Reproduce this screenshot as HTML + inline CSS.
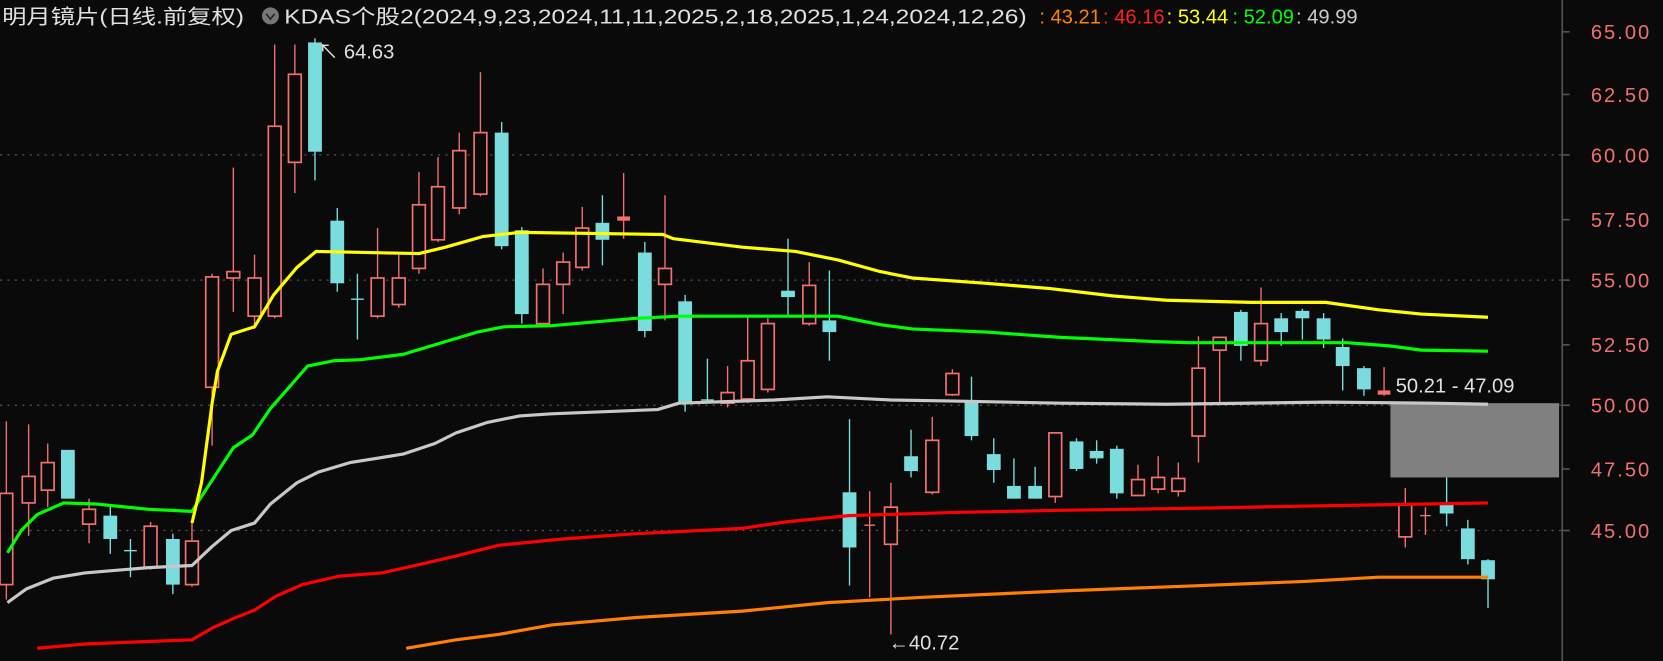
<!DOCTYPE html>
<html><head><meta charset="utf-8"><style>
html,body{margin:0;padding:0;background:#0a0a0a;overflow:hidden}
svg{display:block}
text{font-family:"Liberation Sans","Noto Sans CJK SC",sans-serif}
</style></head><body>
<svg width="1663" height="661" viewBox="0 0 1568 623" preserveAspectRatio="none" xmlns="http://www.w3.org/2000/svg">
<rect width="1568" height="623" fill="#0a0a0a"/>
<g stroke="#555" stroke-width="1.2" stroke-dasharray="2,5">
<line x1="0" y1="146" x2="1473" y2="146"/>
<line x1="0" y1="264" x2="1473" y2="264"/>
<line x1="0" y1="382" x2="1473" y2="382"/>
<line x1="0" y1="500" x2="1473" y2="500"/>
</g>
<line x1="1473" y1="0" x2="1473" y2="623" stroke="#555" stroke-width="1.5"/>
<g stroke="#555" stroke-width="1.5">
<line x1="1473" y1="30" x2="1480" y2="30"/><line x1="1473" y1="89" x2="1480" y2="89"/>
<line x1="1473" y1="146" x2="1480" y2="146"/><line x1="1473" y1="207" x2="1480" y2="207"/>
<line x1="1473" y1="264" x2="1480" y2="264"/><line x1="1473" y1="325" x2="1480" y2="325"/>
<line x1="1473" y1="382" x2="1480" y2="382"/><line x1="1473" y1="442" x2="1480" y2="442"/>
<line x1="1473" y1="500" x2="1480" y2="500"/>
</g>
<g fill="#f07070" font-size="19" lengthAdjust="spacingAndGlyphs">
<text x="1500" y="37" textLength="55">65.00</text><text x="1500" y="96" textLength="55">62.50</text>
<text x="1500" y="153" textLength="55">60.00</text><text x="1500" y="214" textLength="55">57.50</text>
<text x="1500" y="271" textLength="55">55.00</text><text x="1500" y="332" textLength="55">52.50</text>
<text x="1500" y="389" textLength="55">50.00</text><text x="1500" y="449" textLength="55">47.50</text>
<text x="1500" y="507" textLength="55">45.00</text>
</g>
<rect x="1311" y="380" width="159" height="70" fill="#808080"/>

<!-- red wicks -->
<g stroke="#f27070" stroke-width="1.3">
<line x1="6" y1="397" x2="6" y2="565"/><line x1="27" y1="400" x2="27" y2="505"/><line x1="45" y1="418" x2="45" y2="478"/>
<line x1="84" y1="470" x2="84" y2="512"/><line x1="142" y1="492" x2="142" y2="537"/><line x1="181" y1="490" x2="181" y2="553"/>
<line x1="200" y1="258" x2="200" y2="420"/><line x1="220" y1="158" x2="220" y2="294"/><line x1="240" y1="240" x2="240" y2="310"/>
<line x1="259" y1="42" x2="259" y2="300"/><line x1="278" y1="42" x2="278" y2="182"/><line x1="356" y1="215" x2="356" y2="300"/>
<line x1="376" y1="240" x2="376" y2="290"/><line x1="395" y1="162" x2="395" y2="258"/><line x1="413" y1="148" x2="413" y2="228"/>
<line x1="433" y1="125" x2="433" y2="202"/><line x1="453" y1="68" x2="453" y2="185"/><line x1="512" y1="253" x2="512" y2="307"/>
<line x1="531" y1="238" x2="531" y2="296"/><line x1="549" y1="195" x2="549" y2="255"/><line x1="588" y1="163" x2="588" y2="225"/>
<line x1="627" y1="184" x2="627" y2="302"/><line x1="686" y1="345" x2="686" y2="384"/><line x1="705" y1="298" x2="705" y2="380"/>
<line x1="724" y1="300" x2="724" y2="370"/><line x1="763" y1="247" x2="763" y2="307"/><line x1="820" y1="463" x2="820" y2="563"/>
<line x1="840" y1="455" x2="840" y2="598"/><line x1="879" y1="393" x2="879" y2="466"/><line x1="898" y1="348" x2="898" y2="373"/>
<line x1="995" y1="408" x2="995" y2="474"/><line x1="1073" y1="438" x2="1073" y2="467"/><line x1="1092" y1="430" x2="1092" y2="465"/>
<line x1="1111" y1="436" x2="1111" y2="468"/><line x1="1130" y1="317" x2="1130" y2="436"/><line x1="1150" y1="318" x2="1150" y2="380"/>
<line x1="1189" y1="271" x2="1189" y2="345"/><line x1="1305" y1="346" x2="1305" y2="373"/><line x1="1325" y1="460" x2="1325" y2="516"/>
<line x1="1344" y1="478" x2="1344" y2="504"/>
<line x1="815" y1="495" x2="825" y2="495"/><line x1="1339" y1="486" x2="1349" y2="486"/>
</g>
<!-- red bodies -->
<g fill="#0a0a0a" stroke="#f27070" stroke-width="1.6">
<rect x="0" y="465" width="12" height="86"/><rect x="21" y="449" width="12" height="25"/><rect x="39" y="436" width="12" height="26"/>
<rect x="78" y="480" width="12" height="14"/><rect x="136" y="496" width="12" height="39"/><rect x="175" y="510" width="12" height="41"/>
<rect x="194" y="261" width="12" height="104"/><rect x="214" y="256" width="12" height="6"/><rect x="234" y="262" width="12" height="36"/>
<rect x="253" y="119" width="12" height="179"/><rect x="272" y="70" width="12" height="83"/><rect x="350" y="262" width="12" height="36"/>
<rect x="370" y="262" width="12" height="25"/><rect x="389" y="193" width="12" height="60"/><rect x="407" y="176" width="12" height="50"/>
<rect x="427" y="142" width="12" height="54"/><rect x="447" y="125" width="12" height="58"/><rect x="506" y="268" width="12" height="37"/>
<rect x="525" y="247" width="12" height="21"/><rect x="543" y="215" width="12" height="37"/>
<rect x="621" y="253" width="12" height="15"/><rect x="680" y="370" width="12" height="10"/><rect x="699" y="340" width="12" height="36"/>
<rect x="718" y="305" width="12" height="62"/><rect x="757" y="269" width="12" height="36"/>
<rect x="834" y="478" width="12" height="35"/><rect x="873" y="415" width="12" height="49"/><rect x="892" y="352" width="12" height="20"/>
<rect x="989" y="408" width="12" height="60"/><rect x="1067" y="452" width="12" height="15"/><rect x="1086" y="450" width="12" height="11"/>
<rect x="1105" y="451" width="12" height="12"/><rect x="1124" y="347" width="12" height="64"/><rect x="1144" y="318" width="12" height="12"/>
<rect x="1183" y="305" width="12" height="35"/><rect x="1319" y="476" width="12" height="30"/>
</g>
<g fill="#f27070"><rect x="582" y="204" width="12" height="4"/><rect x="1299" y="368" width="12" height="4"/></g>
<!-- cyan -->
<g stroke="#7adcdc" stroke-width="1.3">
<line x1="104" y1="476" x2="104" y2="522"/><line x1="123" y1="508" x2="123" y2="544"/><line x1="163" y1="503" x2="163" y2="560"/>
<line x1="297" y1="36" x2="297" y2="170"/><line x1="318" y1="196" x2="318" y2="275"/><line x1="337" y1="258" x2="337" y2="320"/>
<line x1="473" y1="115" x2="473" y2="235"/><line x1="492" y1="214" x2="492" y2="305"/><line x1="568" y1="184" x2="568" y2="250"/>
<line x1="608" y1="228" x2="608" y2="318"/><line x1="646" y1="278" x2="646" y2="388"/><line x1="667" y1="338" x2="667" y2="380"/>
<line x1="743" y1="225" x2="743" y2="297"/><line x1="782" y1="255" x2="782" y2="340"/><line x1="801" y1="395" x2="801" y2="552"/>
<line x1="859" y1="405" x2="859" y2="450"/><line x1="916" y1="355" x2="916" y2="415"/><line x1="937" y1="413" x2="937" y2="455"/>
<line x1="956" y1="432" x2="956" y2="470"/><line x1="976" y1="440" x2="976" y2="470"/><line x1="1015" y1="413" x2="1015" y2="444"/>
<line x1="1034" y1="415" x2="1034" y2="437"/><line x1="1053" y1="420" x2="1053" y2="470"/><line x1="1170" y1="292" x2="1170" y2="340"/>
<line x1="1208" y1="295" x2="1208" y2="326"/><line x1="1228" y1="291" x2="1228" y2="320"/><line x1="1248" y1="295" x2="1248" y2="328"/>
<line x1="1266" y1="319" x2="1266" y2="368"/><line x1="1286" y1="345" x2="1286" y2="373"/><line x1="1364" y1="450" x2="1364" y2="496"/>
<line x1="1384" y1="490" x2="1384" y2="532"/><line x1="1403" y1="527" x2="1403" y2="573"/>
<line x1="117" y1="519" x2="129" y2="519"/><line x1="331" y1="282" x2="343" y2="282"/><line x1="661" y1="377" x2="673" y2="377"/>
</g>
<g fill="#7adcdc">
<rect x="57.5" y="424" width="13" height="46"/><rect x="97.5" y="486" width="13" height="22"/><rect x="156.5" y="508" width="13" height="43"/>
<rect x="290.5" y="40" width="13" height="103"/><rect x="311.5" y="208" width="13" height="59"/><rect x="466.5" y="125" width="13" height="107"/>
<rect x="485.5" y="217" width="13" height="79"/><rect x="561.5" y="210" width="13" height="16"/><rect x="601.5" y="238" width="13" height="74"/>
<rect x="639.5" y="284" width="13" height="96"/><rect x="736.5" y="274" width="13" height="6"/><rect x="775.5" y="302" width="13" height="11"/>
<rect x="794.5" y="464" width="13" height="52"/><rect x="852.5" y="430" width="13" height="14"/><rect x="909.5" y="377" width="13" height="34"/>
<rect x="930.5" y="428" width="13" height="15"/><rect x="949.5" y="458" width="13" height="12"/><rect x="969.5" y="458" width="13" height="12"/>
<rect x="1008.5" y="416" width="13" height="26"/><rect x="1027.5" y="425" width="13" height="7"/><rect x="1046.5" y="423" width="13" height="42"/>
<rect x="1163.5" y="294" width="13" height="32"/><rect x="1201.5" y="300" width="13" height="13"/><rect x="1221.5" y="293" width="13" height="7"/>
<rect x="1241.5" y="300" width="13" height="20"/><rect x="1259.5" y="327" width="13" height="18"/><rect x="1279.5" y="347" width="13" height="20"/>
<rect x="1357.5" y="476" width="13" height="8"/><rect x="1377.5" y="498" width="13" height="29"/><rect x="1396.5" y="528" width="13" height="18"/>
</g>

<g fill="none" stroke-width="3" stroke-linejoin="round">
<polyline stroke="#ff8000" points="383,611 430,603 470,598 520,589 600,582 700,576 780,568 870,563 1000,557 1130,552 1230,548 1300,544 1403,544"/>
<polyline stroke="#ff0000" points="35,611 80,607 130,605 181,603 200,592 220,583 240,575 260,562 285,551 320,543 360,540 400,531 430,524 470,514 530,508 600,503 700,498 740,492 800,486 900,483 1000,481 1130,479 1230,477 1403,474"/>
<polyline stroke="#c8c8c8" points="7,568 25,555 50,545 80,540 140,535 181,533 200,515 218,500 240,493 255,475 280,455 300,445 330,436 380,428 410,418 430,408 460,398 490,392 520,390 620,386 640,380 730,377 780,374 840,377 900,378 1000,380 1100,381 1250,379 1350,380 1403,381"/>
<polyline stroke="#00ff00" points="7,521 20,500 35,485 60,474 90,475 140,480 181,482 190,468 205,445 220,422 238,410 255,385 270,368 290,345 315,340 340,339 380,334 420,322 450,313 475,308 520,307 600,300 640,298 700,298 790,298 830,306 860,310 930,313 1000,318 1090,322 1120,323 1200,323 1270,323 1310,326 1340,330 1403,331"/>
<polyline stroke="#ffff00" points="181,493 190,455 200,380 205,350 218,315 240,308 258,278 280,252 298,237 395,239 420,233 455,223 490,219 625,221 635,225 700,233 750,237 790,245 830,256 860,262 930,267 990,272 1050,279 1100,283 1180,285 1250,285 1300,292 1340,296 1403,299"/>
</g>
<text x="2" y="22" fill="#e0e0e0" font-size="19" textLength="228" lengthAdjust="spacingAndGlyphs">明月镜片(日线.前复权)</text>
<circle cx="255" cy="15" r="8" fill="#777"/>
<path d="M251 13 L255 18 L259 13" stroke="#222" stroke-width="1.5" fill="none"/>
<text y="22" font-size="19"><tspan x="268" fill="#e0e0e0" textLength="700" lengthAdjust="spacingAndGlyphs">KDAS个股2(2024,9,23,2024,11,11,2025,2,18,2025,1,24,2024,12,26)</tspan><tspan x="980" fill="#ff8000">: 43.21</tspan><tspan x="1040" fill="#ff2020">: 46.16</tspan><tspan x="1100" fill="#ffff00">: 53.44</tspan><tspan x="1162" fill="#00ff00">: 52.09</tspan><tspan x="1222" fill="#ccc">: 49.99</tspan></text>
<text x="300" y="55" fill="#e0e0e0" font-size="19">↖ 64.63</text>
<text x="838" y="612" fill="#e0e0e0" font-size="19">←40.72</text>
<text x="1316" y="370" fill="#e0e0e0" font-size="19">50.21 - 47.09</text>
</svg>
</body></html>
